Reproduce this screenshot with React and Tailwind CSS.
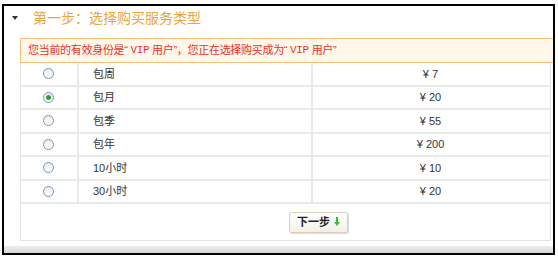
import React, { useState } from 'react';

const PLANS = [
    { id: 'week', name: '包周', price: '7' },
    { id: 'month', name: '包月', price: '20' },
    { id: 'season', name: '包季', price: '55' },
    { id: 'year', name: '包年', price: '200' },
    { id: 'h10', name: '10小时', price: '10' },
    { id: 'h30', name: '30小时', price: '20' },
];

const mono = { fontFamily: '"Liberation Mono", monospace' };

function Radio({ checked, onClick }) {
    return (
        <span
            onClick={onClick}
            className="flex h-[11px] w-[11px] items-center justify-center rounded-full border border-[#7096bd] bg-gradient-to-b from-[#ececec] to-white"
        >
            {checked && <span className="h-[5px] w-[5px] rounded-full bg-[#2aa52a]" />}
        </span>
    );
}

export default function App() {
    const [selected, setSelected] = useState('month');

    return (
        <div className="h-[259px] w-[558px] bg-white pl-[2px] pt-[4px]" style={{ fontFamily: '"Liberation Sans", "Noto Sans CJK SC", sans-serif' }}>
            <div className="flex h-[251px] w-[553px] flex-col border-2 border-black bg-white">
                <div className="flex h-[24px] items-center pl-[8px]">
                    <span className="h-0 w-0 border-x-[3px] border-t-[4px] border-x-transparent border-t-[#333]" />
                    <span className="ml-[15px] text-[14px] leading-none text-[#eaa53a]">第一步：选择购买服务类型</span>
                </div>

                <div className="ml-[16px] mt-[8px] flex h-[25px] items-center whitespace-pre border border-r-0 border-[#f5c07a] bg-[#fff8ea] pl-[7px] text-[11px] tracking-[-0.3px] text-[#e8312a]">
                    {'您当前的有效身份是“ '}<span style={mono}>VIP</span>{' 用户”，您正在选择购买成为“ '}<span style={mono}>VIP</span>{' 用户”'}
                </div>

                <div className="ml-[16px] mr-[2px] border-x border-b border-[#e3e3e3]">
                    {PLANS.map((p) => (
                        <div key={p.id} className="flex h-[23.5px] border-b-2 border-[#e9e9e9] text-[11px] text-[#333]">
                            <div className="flex w-[58px] items-center justify-center border-r-2 border-[#e9e9e9] pr-[1px]">
                                <Radio checked={selected === p.id} onClick={() => setSelected(p.id)} />
                            </div>
                            <div className="flex w-[234px] items-center border-r-2 border-[#e9e9e9] pl-[14px]">{p.name}</div>
                            <div className="flex flex-1 items-center justify-center pr-[2px]">¥ {p.price}</div>
                        </div>
                    ))}
                    <div className="flex h-[36px] items-center justify-center pl-[66px]">
                        <button className="flex h-[21px] items-center gap-[4px] rounded-[2px] border border-[#d8d0b8] bg-gradient-to-b from-white to-[#f3f0e6] px-[7px] text-[11px] font-bold text-[#222] shadow-[1px_1px_1px_rgba(0,0,0,0.15)]">
                            下一步
                            <svg width="6" height="10" viewBox="0 0 6 10">
                                <rect x="2" y="0" width="2" height="6" fill="#3cb83c" />
                                <path d="M0 5 L6 5 L3 9 Z" fill="#3cb83c" />
                            </svg>
                        </button>
                    </div>
                </div>

                <div className="mt-auto h-[7px] bg-gradient-to-b from-[#ececec] to-[#d8d8d8]" />
            </div>
        </div>
    );
}
